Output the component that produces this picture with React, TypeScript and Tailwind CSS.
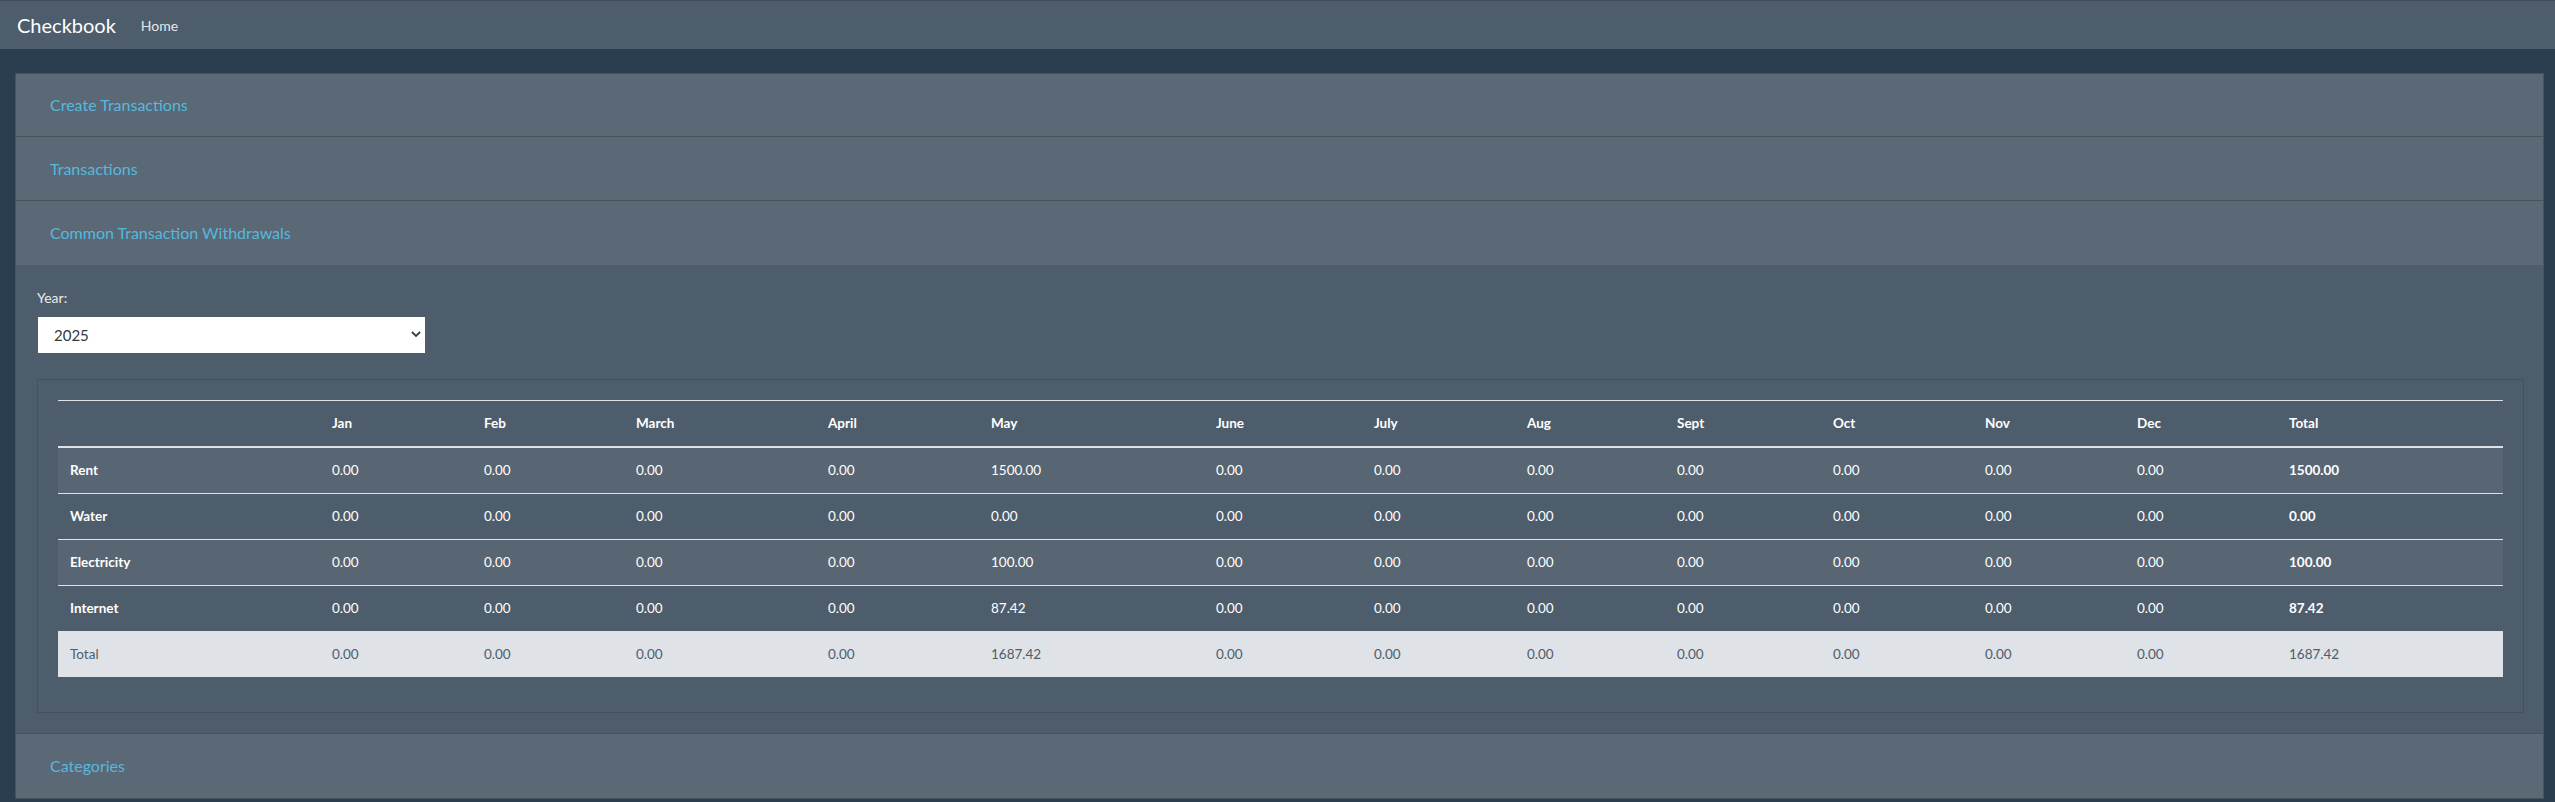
import React from "react";

const months = ["Jan", "Feb", "March", "April", "May", "June", "July", "Aug", "Sept", "Oct", "Nov", "Dec"];

type Row = { name: string; values: string[]; total: string };

const rows: Row[] = [
  { name: "Rent", values: ["0.00", "0.00", "0.00", "0.00", "1500.00", "0.00", "0.00", "0.00", "0.00", "0.00", "0.00", "0.00"], total: "1500.00" },
  { name: "Water", values: ["0.00", "0.00", "0.00", "0.00", "0.00", "0.00", "0.00", "0.00", "0.00", "0.00", "0.00", "0.00"], total: "0.00" },
  { name: "Electricity", values: ["0.00", "0.00", "0.00", "0.00", "100.00", "0.00", "0.00", "0.00", "0.00", "0.00", "0.00", "0.00"], total: "100.00" },
  { name: "Internet", values: ["0.00", "0.00", "0.00", "0.00", "87.42", "0.00", "0.00", "0.00", "0.00", "0.00", "0.00", "0.00"], total: "87.42" },
];

const totals = ["0.00", "0.00", "0.00", "0.00", "1687.42", "0.00", "0.00", "0.00", "0.00", "0.00", "0.00", "0.00"];

const gridCols =
  "grid grid-cols-[262px_152px_152px_192px_163px_225px_158px_153px_150px_156px_152px_152px_152px_225px]";

function AccordionHeader({ title, last, tall }: { title: string; last?: boolean; tall?: boolean }) {
  return (
    <div
      className={
        (tall ? "h-[64px] " : "h-[63px] ") +
        "flex items-center pl-[34px] bg-[#5b6876] text-[16px] text-[#55b9de] " +
        (last ? "" : "border-b border-[#46545f]")
      }
    >
      {title}
    </div>
  );
}

export default function App() {
  return (
    <div
      className="min-h-screen bg-[#2b3e50] text-[#ebebeb]"
      style={{ fontFamily: "Lato, 'Open Sans', 'Liberation Sans', sans-serif" }}
    >
      {/* Navbar */}
      <nav className="h-[49px] bg-[#4e5d6c] border-t border-[#3f4c59] flex items-center pl-[17px]">
        <span className="text-[20px] text-white leading-none">Checkbook</span>
        <span className="ml-[25px] text-[14px] text-[#e4e7ea]">Home</span>
      </nav>

      <div className="pt-[24px] pl-[15px] pr-[11px] pb-[4px]">
        <div className="border border-[#46545f]">
          <AccordionHeader title="Create Transactions" />
          <AccordionHeader title="Transactions" tall />
          <AccordionHeader title="Common Transaction Withdrawals" last tall />

          {/* Body */}
          <div className="bg-[#4e5d6c] pt-[22px] pl-[21px] pr-[19px] pb-[20px] border-b border-[#46545f]">
            <label className="block text-[14px] leading-[22px] text-[#ebebeb]">Year:</label>
            <div className="relative mt-[8px] ml-[1px] w-[387px] h-[36px] bg-white flex items-center">
              <span className="pl-[16px] text-[15px] text-[#333a40]">2025</span>
              <svg
                className="absolute right-[4px] top-[14px]"
                width="10"
                height="7"
                viewBox="0 0 10 7"
                fill="none"
              >
                <polyline points="1,1 5,5 9,1" stroke="#3a3f44" strokeWidth="1.8" />
              </svg>
            </div>

            {/* Card */}
            <div className="mt-[26px] border border-[#435160] pt-[20px] px-[20px] pb-[35px]">
              <div className="text-[13.5px]">
                {/* Header row */}
                <div className={gridCols + " h-[48px] border-t border-b-2 border-[#dee2e6] items-center font-bold text-white"}>
                  <div className="pl-[12px]"></div>
                  {months.map((m) => (
                    <div key={m} className="pl-[12px]">
                      {m}
                    </div>
                  ))}
                  <div className="pl-[12px]">Total</div>
                </div>

                {rows.map((r, i) => (
                  <div
                    key={r.name}
                    className={
                      gridCols +
                      " h-[46px] border-b border-[#dee2e6] items-center text-white " +
                      (i % 2 === 0 ? "bg-[#586573]" : "bg-[#4e5d6c]")
                    }
                  >
                    <div className="pl-[12px] font-bold">{r.name}</div>
                    {r.values.map((v, j) => (
                      <div key={j} className="pl-[12px]">
                        {v}
                      </div>
                    ))}
                    <div className="pl-[12px] font-bold">{r.total}</div>
                  </div>
                ))}

                {/* Total row */}
                <div className={gridCols + " h-[45px] items-center bg-[#dfe2e6] text-[#4e5d6c]"}>
                  <div className="pl-[12px]">Total</div>
                  {totals.map((v, j) => (
                    <div key={j} className="pl-[12px]">
                      {v}
                    </div>
                  ))}
                  <div className="pl-[12px]">1687.42</div>
                </div>
              </div>
            </div>
          </div>

          <AccordionHeader title="Categories" last tall />
        </div>
      </div>
    </div>
  );
}
